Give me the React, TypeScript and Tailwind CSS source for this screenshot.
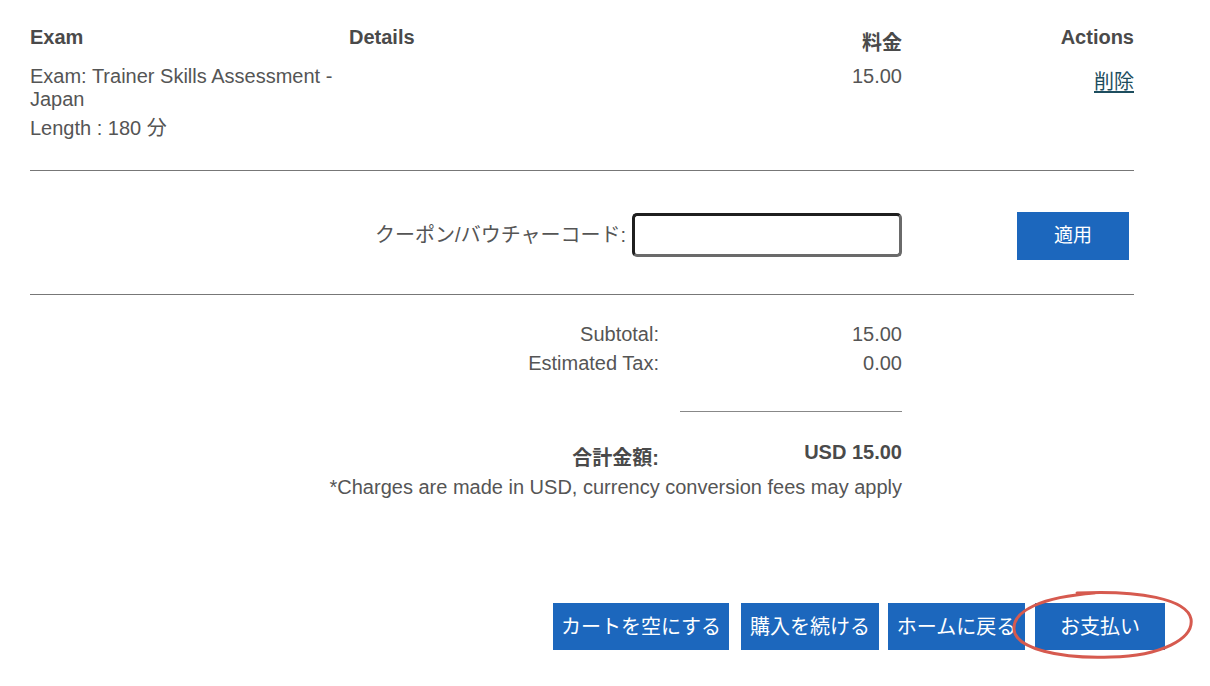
import React from "react";

// Cart summary page: line items, coupon entry, totals and checkout actions

const FONT = "font-['Liberation_Sans','Noto_Sans_CJK_JP',sans-serif]";

const ACTIONS: { label: string; width: string; gap: string }[] = [
  { label: "カートを空にする", width: "w-[176px]", gap: "" },
  { label: "購入を続ける", width: "w-[138px]", gap: "ml-[12px]" },
  { label: "ホームに戻る", width: "w-[137px]", gap: "ml-[9px]" },
];

export default function App() {
  return (
    <div className={`${FONT} min-h-[686px] w-[1210px] bg-white text-[20px] text-[#555]`}>
      <div className="ml-[30px] w-[1104px]">
        {/* Table header */}
        <div className="grid grid-cols-[319px_310px_243px_232px] pt-[26px] font-bold text-[#4a4a4a]">
          <div className="leading-[22px]">Exam</div>
          <div className="leading-[22px]">Details</div>
          <div className="pt-[6px] text-right leading-[22px]">料金</div>
          <div className="text-right leading-[22px]">Actions</div>
        </div>

        {/* Line item */}
        <div className="mt-[11px] grid grid-cols-[319px_310px_243px_232px]">
          <div>
            <p className="leading-[23px]">Exam: Trainer Skills Assessment - Japan</p>
            <p className="mt-[6px] leading-[23px]">Length : 180 分</p>
          </div>
          <div />
          <div className="text-right leading-[23px]">15.00</div>
          <div className="pt-[6px] text-right leading-[23px]">
            <a href="#" className="text-[#1d4d5e] underline underline-offset-2">
              削除
            </a>
          </div>
        </div>

        <hr className="mt-[30px] border-0 border-t border-[#777]" />

        {/* Coupon */}
        <div className="flex h-[123px] items-start pt-[41px]">
          <div className="mt-[1px] flex w-[872px] items-center justify-end">
            <label className="mr-[6px]">クーポン/バウチャーコード:</label>
            <input
              type="text"
              className="h-[44px] w-[270px] rounded-[5px] border-[3px] border-t-[#1f1f1f] border-l-[#1f1f1f] border-r-[#6a6a6a] border-b-[#6a6a6a] bg-white outline-none"
            />
          </div>
          <button
            type="button"
            className="ml-[115px] h-[48px] w-[112px] shrink-0 bg-[#1c67bd] text-[19px] text-white"
          >
            適用
          </button>
        </div>

        <hr className="border-0 border-t border-[#777]" />

        {/* Totals */}
        <div className="mt-[25px] grid grid-cols-[629px_243px] leading-[29px]">
          <div className="text-right">Subtotal:</div>
          <div className="text-right">15.00</div>
          <div className="text-right">Estimated Tax:</div>
          <div className="text-right">0.00</div>
        </div>
        <div className="ml-[650px] mt-[33px] h-px w-[222px] bg-[#888]" />
        <div className="mt-[29px] grid grid-cols-[629px_243px] font-bold text-[#4a4a4a]">
          <div className="pt-[6px] text-right leading-[23px]">合計金額:</div>
          <div className="text-right leading-[23px]">USD 15.00</div>
        </div>
        <div className="mt-[6px] w-[872px] text-right leading-[23px]">
          *Charges are made in USD, currency conversion fees may apply
        </div>

        {/* Checkout actions */}
        <div className="ml-[523px] mt-[104px] flex items-center">
          {ACTIONS.map(({ label, width, gap }) => (
            <button
              key={label}
              type="button"
              className={`${width} ${gap} h-[47px] shrink-0 whitespace-nowrap bg-[#1c67bd] text-[20px] text-white`}
            >
              {label}
            </button>
          ))}
          <div className="relative ml-[10px] shrink-0">
            <button type="button" className="h-[47px] w-[130px] bg-[#1c67bd] text-[20px] text-white">
              お支払い
            </button>
            {/* hand-drawn highlight */}
            <svg
              className="pointer-events-none absolute left-[-24px] top-[-14px]"
              width="184"
              height="72"
              viewBox="0 0 184 72"
              fill="none"
            >
              <path
                d="M66 4 C128 1 176 10 180 30 C183 50 150 67 100 68 C50 70 4 60 3 40 C2 22 30 8 84 4"
                stroke="#d65a4f"
                strokeWidth="3"
                strokeLinecap="round"
              />
            </svg>
          </div>
        </div>
      </div>
    </div>
  );
}
